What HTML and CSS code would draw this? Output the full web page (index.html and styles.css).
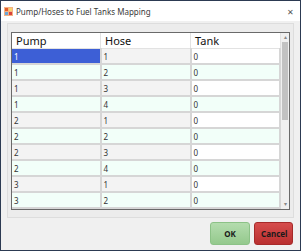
FILE: index.html
```html
<!DOCTYPE html>
<html lang="en">
<head>
  <meta charset="UTF-8">
  <title>Pump/Hoses to Fuel Tanks Mapping</title>
  <link rel="stylesheet" href="styles.css">
</head>
<body>

<div class="window">

  <!-- Title bar -->
  <div class="titlebar">
    <svg class="app-icon" width="9" height="9" viewBox="0 0 9 9">
      <rect x="0" y="0" width="9" height="9" fill="#f4b183"/>
      <rect x="1" y="1" width="3" height="3" fill="#e05a2a"/>
      <rect x="5" y="1" width="3" height="3" fill="#f7d36b"/>
      <rect x="1" y="5" width="3" height="3" fill="#6aa7d8"/>
      <rect x="5" y="5" width="3" height="3" fill="#d9423a"/>
    </svg>
    <span class="title">Pump/Hoses to Fuel Tanks Mapping</span>
    <span class="close">&#x2715;</span>
  </div>

  <div class="content">
    <div class="panel">
      <div class="grid">
        <table class="mapping">
          <thead>
            <tr><th>Pump</th><th>Hose</th><th>Tank</th></tr>
          </thead>
          <tbody id="rows"></tbody>
        </table>
        <div class="scrollbar">
          <div class="arrow">&#x25B4;</div>
          <div class="track"><div class="thumb"></div></div>
          <div class="arrow">&#x25BE;</div>
        </div>
      </div>
    </div>

    <div class="buttons">
      <button class="btn ok">OK</button>
      <button class="btn cancel">Cancel</button>
    </div>
  </div>
</div>

<script>
  const mapping = [
    [1, 1, 0], [1, 2, 0], [1, 3, 0], [1, 4, 0], [2, 1, 0],
    [2, 2, 0], [2, 3, 0], [2, 4, 0], [3, 1, 0], [3, 2, 0]
  ];

  const tbody = document.getElementById('rows');
  mapping.forEach((m, i) => {
    const tr = document.createElement('tr');
    if (i % 2 === 1) tr.className = 'alt';
    tr.innerHTML = `<td class="ro${i === 0 ? ' current' : ''}">${m[0]}</td>` +
                   `<td class="ro">${m[1]}</td><td>${m[2]}</td>`;
    tbody.appendChild(tr);
  });
</script>

</body>
</html>
```

FILE: styles.css
```css
body {
  margin: 0;
  font-family: "Noto Sans", "Open Sans", sans-serif;
  background: #ffffff;
}

.window {
  width: 301px;
  height: 251px;
  box-sizing: border-box;
  border: 1px solid #2c3a52;
  background: #f0f0f0;
  display: flex;
  flex-direction: column;
}

.titlebar {
  height: 20px;
  background: #ffffff;
  display: flex;
  align-items: center;
  padding-left: 3px;
  color: #3a3a3a;
  font-size: 8px;
}

.app-icon {
  margin-right: 3px;
}

.title {
  flex: 1;
}

.close {
  font-size: 8px;
  color: #555;
  margin-right: 6px;
}

.content {
  flex: 1;
  padding: 2px 6px 0 6px;
  display: flex;
  flex-direction: column;
}

.panel {
  border: 1px solid #dddddd;
  background: #ececec;
  padding: 8px 3px 7px 3px;
}

.grid {
  display: flex;
  border: 1px solid #6a6a6a;
  background: #ffffff;
}

.mapping {
  flex: 1;
  border-collapse: collapse;
  table-layout: fixed;
  font-size: 8px;
  color: #333;
}

.mapping th {
  height: 15px;
  padding: 0 0 0 4px;
  text-align: left;
  font-weight: normal;
  font-size: 11px;
  color: #111;
  background: #ffffff;
  border-right: 1px solid #e2e2e2;
  border-bottom: 1px solid #e2e2e2;
}

.mapping th:first-child {
  width: 84px;
}

.mapping th:nth-child(2) {
  width: 85px;
}

.mapping td {
  height: 14px;
  padding: 0 0 0 2px;
  background: #ffffff;
  border-right: 2px solid #d6d6d6;
  border-bottom: 2px solid #d6d6d6;
}

.mapping td.ro {
  background: #f3f3f3;
}

.mapping tr.alt td {
  background: #f2fff9;
}

.mapping td.current {
  background: #3d5fd6;
  color: #ffffff;
}

.scrollbar {
  width: 8px;
  display: flex;
  flex-direction: column;
  background: #f0f0f0;
}

.arrow {
  height: 9px;
  font-size: 6px;
  line-height: 9px;
  text-align: center;
  color: #888;
}

.track {
  flex: 1;
  padding: 0 1px;
}

.thumb {
  height: 78px;
  background: #c2c2c2;
}

.buttons {
  display: flex;
  justify-content: flex-end;
  gap: 4px;
  margin-top: 4px;
  padding-right: 1px;
}

.btn {
  width: 40px;
  height: 23px;
  border-radius: 3px;
  font-family: "Noto Sans", sans-serif;
  font-size: 8px;
  font-weight: bold;
  color: #1a1a1a;
  cursor: pointer;
}

.ok {
  background: linear-gradient(#b4dcae, #94c98d);
  border: 1px solid #8cc287;
}

.cancel {
  width: 39px;
  background: linear-gradient(#d64d4d, #b92f2f);
  border: 1px solid #a62a2a;
}
```
